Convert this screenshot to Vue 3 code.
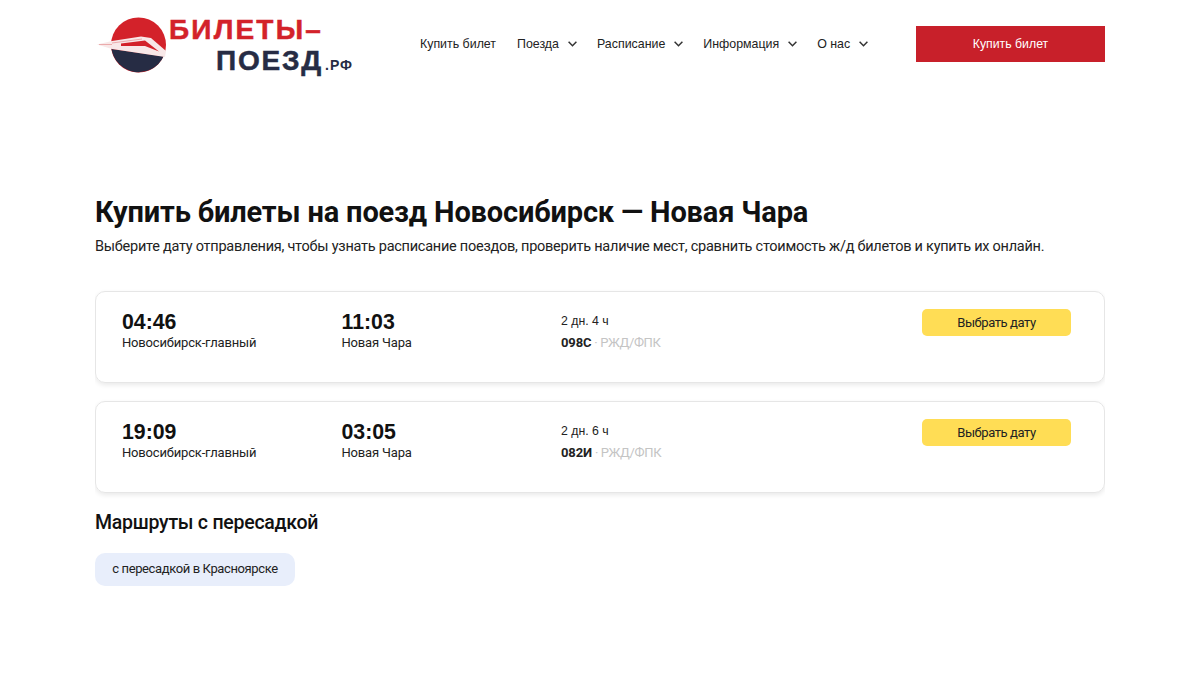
<script setup>
const menu = [
  { label: 'Купить билет', arrow: false },
  { label: 'Поезда', arrow: true },
  { label: 'Расписание', arrow: true },
  { label: 'Информация', arrow: true },
  { label: 'О нас', arrow: true },
]

const trains = [
  { from: '04:46', to: '11:03', duration: '2 дн. 4 ч', number: '098С' },
  { from: '19:09', to: '03:05', duration: '2 дн. 6 ч', number: '082И' },
]
</script>

<template>
  <div class="page">
    <header class="header">
      <svg class="logo" width="260" height="64" viewBox="0 0 260 64">
        <circle cx="43.5" cy="31" r="27.5" fill="#d3222a" />
        <path d="M16.5 35 68.5 42.5A27.5 27.5 0 0 1 16.5 35Z" fill="#262c44" />
        <path d="M2 30.5 17 27 46 22.5 56 24 71 37 70 43 17 35Z" fill="#f8e8e8" />
        <path d="M26 29.5 50 26.5 64 37.5 50 32 26 32Z" fill="#d3222a" />
        <path d="M17 29 47 25 M4 30.5H17" fill="none" stroke="#e79a9c" stroke-width="0.8" />
        <text x="74" y="25" class="logo-top">БИЛЕТЫ–</text>
        <text x="121" y="56" class="logo-bottom">ПОЕЗД</text>
        <text x="230" y="56" class="logo-small">.РФ</text>
      </svg>
      <nav class="menu">
        <a v-for="item in menu" :key="item.label" class="menu-item">
          {{ item.label }}
          <svg v-if="item.arrow" class="arrow" width="9" height="6" viewBox="0 0 9 6">
            <path d="M.6.8 4.5 4.7 8.4.8" fill="none" stroke="#333" stroke-width="1.5" />
          </svg>
        </a>
      </nav>
      <a class="buy">Купить билет</a>
    </header>

    <main class="content">
      <h1>Купить билеты на поезд Новосибирск — Новая Чара</h1>
      <p class="lead">Выберите дату отправления, чтобы узнать расписание поездов, проверить наличие мест, сравнить стоимость ж/д билетов и купить их онлайн.</p>

      <div class="list">
        <section v-for="train in trains" :key="train.number" class="card">
          <div class="col">
            <div class="time">{{ train.from }}</div>
            <div class="station">Новосибирск-главный</div>
          </div>
          <div class="col">
            <div class="time">{{ train.to }}</div>
            <div class="station">Новая Чара</div>
          </div>
          <div class="col info">
            <div class="duration">{{ train.duration }}</div>
            <div class="train"><b>{{ train.number }}</b><span> · РЖД/ФПК</span></div>
          </div>
          <a class="pick">Выбрать дату</a>
        </section>
      </div>

      <h2>Маршруты с пересадкой</h2>
      <a class="chip">с пересадкой в Красноярске</a>
    </main>
  </div>
</template>

<style>
body {
  background: #fff;
}
</style>

<style scoped>
.page {
  width: 1010px;
  margin: 0 auto;
  height: 675px;
  overflow: hidden;
  font-family: Roboto, sans-serif;
  color: #111;
}
.header {
  display: flex;
  align-items: flex-start;
  height: 87px;
}
.logo {
  margin-top: 14px;
  margin-right: 65px;
  flex: none;
}
.logo text {
  font-family: "Liberation Sans", sans-serif;
  font-weight: 700;
}
.logo-top {
  font-size: 28px;
  letter-spacing: 2.2px;
  fill: #d3222a;
  stroke: #d3222a;
  stroke-width: 0.5px;
}
.logo-bottom {
  font-size: 28px;
  letter-spacing: 1.8px;
  fill: #262c44;
  stroke: #262c44;
  stroke-width: 0.5px;
}
.logo-small {
  font-size: 14px;
  letter-spacing: 1px;
  fill: #262c44;
}
.menu {
  display: flex;
  gap: 20px;
  margin-top: 35px;
  flex: 1;
}
.menu-item {
  display: flex;
  align-items: center;
  gap: 9px;
  font-family: "Liberation Sans", sans-serif;
  font-size: 12.4px;
  line-height: 18px;
  color: #222;
}
.menu-item:first-child {
  margin-right: 1px;
}
.buy {
  width: 189px;
  height: 36px;
  margin-top: 26px;
  display: flex;
  align-items: center;
  justify-content: center;
  background: #c8202a;
  color: #fff;
  font-family: "Liberation Sans", sans-serif;
  font-size: 12.3px;
}
.content {
  padding-top: 107px;
}
h1 {
  margin: 0;
  font-size: 29px;
  letter-spacing: -0.15px;
  line-height: 36px;
  font-weight: 700;
}
.lead {
  margin: 6px 0 0;
  font-size: 14.5px;
  letter-spacing: -0.25px;
  line-height: 22px;
  color: #222;
}
.list {
  display: flex;
  flex-direction: column;
  gap: 18px;
  margin-top: 33px;
}
.card {
  height: 92px;
  box-sizing: border-box;
  display: flex;
  align-items: flex-start;
  padding: 17px 33px 0 26px;
  border: 1px solid #e6e6e6;
  border-radius: 10px;
  box-shadow: 0 2px 5px rgba(0, 0, 0, 0.09);
}
.col {
  width: 219.5px;
}
.time {
  font-family: "Liberation Sans", sans-serif;
  font-size: 21.3px;
  font-weight: 700;
  line-height: 26px;
}
.station {
  font-size: 13px;
  letter-spacing: -0.17px;
  line-height: 18px;
  margin-top: -1px;
  color: #222;
}
.info {
  flex: 1;
}
.duration {
  font-family: "Liberation Sans", sans-serif;
  font-size: 12.3px;
  line-height: 25px;
  color: #222;
}
.train {
  font-size: 13px;
  letter-spacing: -0.1px;
  line-height: 18px;
  color: #c4c4c4;
}
.train b {
  color: #222;
}
.train span {
  letter-spacing: -0.35px;
}
.pick {
  width: 149px;
  height: 27px;
  box-sizing: border-box;
  padding-bottom: 1px;
  display: flex;
  align-items: center;
  justify-content: center;
  background: #ffdd55;
  border-radius: 5px;
  font-size: 13px;
  letter-spacing: -0.4px;
  color: #222;
}
h2 {
  margin: 17px 0 0;
  font-size: 19.5px;
  letter-spacing: -0.25px;
  line-height: 26px;
  font-weight: 500;
}
.chip {
  display: inline-block;
  margin-top: 17px;
  width: 200px;
  height: 33px;
  line-height: 31px;
  text-align: center;
  background: #e8eefb;
  border-radius: 10px;
  font-size: 13px;
  letter-spacing: -0.38px;
  color: #222;
}
</style>
